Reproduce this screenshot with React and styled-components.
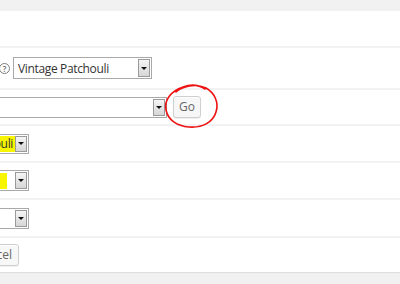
import styled, { createGlobalStyle } from "styled-components";

const GlobalStyle = createGlobalStyle`
  html, body {
    margin: 0;
    padding: 0;
    background: #f1f1f1;
  }
  body {
    font-family: "Open Sans", "Liberation Sans", sans-serif;
    overflow: hidden;
  }
`;

const Page = styled.div`
  width: 400px;
  height: 284px;
  padding-top: 11px;
  box-sizing: border-box;
  overflow: hidden;
`;

const Panel = styled.div`
  background: #fff;
  box-shadow: 0 1px 1px rgba(0, 0, 0, 0.08);
`;

const Row = styled.div`
  height: ${(p) => p.$h}px;
  box-sizing: border-box;
  display: flex;
  align-items: center;
  border-top: ${(p) => (p.$first ? "none" : "2px solid #f2f2f2")};
`;

const Field = styled.div`
  display: flex;
  align-items: center;
  margin-left: ${(p) => p.$shift || 0}px;
`;

const HelpIcon = styled.span`
  width: 9px;
  height: 9px;
  border: 1px solid #7d7d7d;
  border-radius: 50%;
  color: #666;
  font-size: 8px;
  font-weight: 600;
  line-height: 9px;
  text-align: center;
  margin-right: 3px;
  flex-shrink: 0;
`;

const Select = styled.div`
  width: ${(p) => p.$w}px;
  height: ${(p) => p.$h}px;
  box-sizing: border-box;
  display: flex;
  border: 1px solid #a9a9a9;
  background: #fff;
  flex-shrink: 0;
`;

const SelectValue = styled.div`
  flex: 1;
  display: flex;
  align-items: center;
  justify-content: ${(p) => (p.$end ? "flex-end" : "flex-start")};
  padding: 0 ${(p) => (p.$end ? 0 : 4)}px;
  font-size: 12px;
  letter-spacing: -0.35px;
  color: #333;
  overflow: hidden;
  white-space: nowrap;
`;

const Highlight = styled.span`
  background: #f8f500;
  padding: 1px ${(p) => p.$pad}px 1px 0;
  margin-right: ${(p) => p.$gap}px;
  line-height: 14px;
`;

const Arrow = styled.div`
  width: 10px;
  margin: 1px 1px 1px 0;
  border: 1px solid #9a9a9a;
  background: linear-gradient(#f5f5f5, #d6d6d6);
  display: flex;
  align-items: center;
  justify-content: center;
  &::after {
    content: "";
    border-left: 3px solid transparent;
    border-right: 3px solid transparent;
    border-top: 3px solid #111;
  }
`;

const Button = styled.button`
  height: 22px;
  padding: 0 ${(p) => p.$pad || 6}px;
  box-sizing: border-box;
  border: 1px solid #cfcfcf;
  border-radius: 3px;
  background: #f7f7f7;
  box-shadow: inset 0 1px 0 #fff, 0 1px 0 rgba(0, 0, 0, 0.06);
  color: #666;
  font-family: "Open Sans", "Liberation Sans", sans-serif;
  font-size: 12px;
  line-height: 20px;
  flex-shrink: 0;
`;

const Marked = styled.span`
  position: relative;
  display: inline-flex;
  margin-left: 6px;
`;

const Circle = styled.svg`
  position: absolute;
  left: -9px;
  top: -13px;
  overflow: visible;
  pointer-events: none;
`;

export default function App() {
  return (
    <>
      <GlobalStyle />
      <Page>
        <Panel>
          <Row $h={35} $first />
          <Row $h={42}>
            <Field $shift={-1}>
              <HelpIcon>?</HelpIcon>
              <Select $w={139} $h={22}>
                <SelectValue>Vintage Patchouli</SelectValue>
                <Arrow />
              </Select>
            </Field>
          </Row>
          <Row $h={36}>
            <Field $shift={-61}>
              <Select $w={228} $h={21}>
                <SelectValue />
                <Arrow />
              </Select>
              <Marked>
                <Button $pad={5}>Go</Button>
                <Circle width="56" height="48" viewBox="0 0 56 48">
                  <path
                    d="M 12 9 C 18 3, 32 0, 42 5 C 51 10, 55 20, 52 29 C 49 39, 39 45, 25 44 C 13 43, 4 37, 2 27 C 0 17, 7 8, 19 4 C 27 1, 35 2, 41 6"
                    fill="none"
                    stroke="#ee1111"
                    strokeWidth="1.6"
                    strokeLinecap="round"
                  />
                </Circle>
              </Marked>
            </Field>
          </Row>
          <Row $h={37}>
            <Field $shift={-61}>
              <Select $w={90} $h={20}>
                <SelectValue $end>
                  <Highlight $pad={2} $gap={0}>Vintage Patchouli</Highlight>
                </SelectValue>
                <Arrow />
              </Select>
            </Field>
          </Row>
          <Row $h={37}>
            <Field $shift={-61}>
              <Select $w={90} $h={21}>
                <SelectValue $end>
                  <Highlight $pad={9} $gap={8}>Yes</Highlight>
                </SelectValue>
                <Arrow />
              </Select>
            </Field>
          </Row>
          <Row $h={38}>
            <Field $shift={-61}>
              <Select $w={90} $h={21}>
                <SelectValue />
                <Arrow />
              </Select>
            </Field>
          </Row>
          <Row $h={36}>
            <Field $shift={-32}>
              <Button $pad={6}>Cancel</Button>
            </Field>
          </Row>
        </Panel>
      </Page>
    </>
  );
}
